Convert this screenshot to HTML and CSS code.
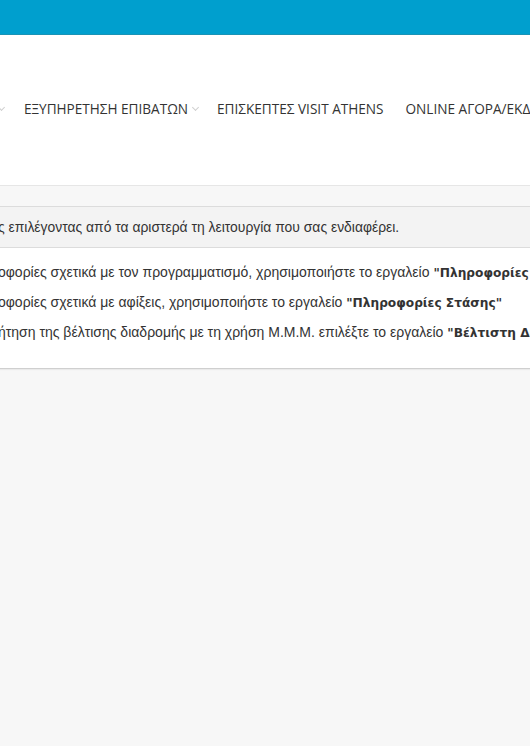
FILE: index.html
```html
<!DOCTYPE html>
<html lang="el">
<head>
<meta charset="utf-8">
<title>ΟΑΣΑ</title>
<link rel="stylesheet" href="styles.css">
</head>
<body>
<div class="topbar"></div>
<header class="header">
  <nav class="nav">
    <span class="nav-item cut"><span class="chev"></span></span>
    <span class="nav-item">ΕΞΥΠΗΡΕΤΗΣΗ ΕΠΙΒΑΤΩΝ<span class="chev"></span></span>
    <span class="nav-item">ΕΠΙΣΚΕΠΤΕΣ VISIT ATHENS</span>
    <span class="nav-item">ONLINE ΑΓΟΡΑ/ΕΚΔΟΣΗ</span>
  </nav>
</header>
<main class="main">
  <section class="panel">
    <div class="panel-head">ς επιλέγοντας από τα αριστερά τη λειτουργία που σας ενδιαφέρει.</div>
    <ul class="panel-body">
      <li>οφορίες σχετικά με τον προγραμματισμό, χρησιμοποιήστε το εργαλείο <b>"Πληροφορίες Γραμμής"</b></li>
      <li>οφορίες σχετικά με αφίξεις, χρησιμοποιήστε το εργαλείο <b>"Πληροφορίες Στάσης"</b></li>
      <li>ήτηση της βέλτισης διαδρομής με τη χρήση Μ.Μ.Μ. επιλέξτε το εργαλείο <b>"Βέλτιστη Διαδρομή"</b></li>
    </ul>
  </section>
</main>
</body>
</html>
```
FILE: styles.css
```css
html, body {
  margin: 0;
  padding: 0;
}
body {
  background: #f7f7f7;
  overflow: hidden;
  width: 530px;
  height: 746px;
  font-family: "Liberation Sans", Arial, sans-serif;
  color: #333;
}
.topbar {
  height: 34px;
  background: #009fce;
  border-bottom: 1px solid #1a93b5;
}
.header {
  background: #fff;
  height: 150px;
  border-bottom: 1px solid #e6e6e6;
  overflow: hidden;
}
.nav {
  display: flex;
  white-space: nowrap;
  padding-top: 65px;
  margin-left: -6px;
  font-family: "Open Sans", sans-serif;
  font-size: 13.6px;
  line-height: 18px;
  color: #333;
}
.nav-item {
  display: flex;
  align-items: center;
  margin-right: 22px;
}
.nav-item.cut {
  margin-right: 20px;
}
.nav-item:nth-child(2) {
  margin-right: 19px;
}
.chev {
  display: inline-block;
  width: 4px;
  height: 4px;
  border-right: 1px solid #d0d0d0;
  border-bottom: 1px solid #d0d0d0;
  transform: rotate(45deg);
  margin-left: 5px;
  margin-top: -3px;
}
.main {
  padding-top: 20px;
}
.panel {
  background: #fff;
  border-top: 1px solid #dcdcdc;
  border-bottom: 1px solid #cfcfcf;
  box-shadow: 0 1px 1px rgba(0,0,0,0.05);
  width: 560px;
}
.panel-head {
  background: #f3f3f3;
  border-bottom: 1px solid #dcdcdc;
  height: 40px;
  line-height: 40px;
  font-size: 13.9px;
  white-space: nowrap;
  overflow: hidden;
  text-indent: -2px;
}
.panel-body {
  list-style: none;
  margin: 0;
  padding: 9px 0 21px;
  font-size: 14px;
  white-space: nowrap;
  overflow: hidden;
}
.panel-body li {
  height: 30px;
  line-height: 30px;
  text-indent: -2px;
}
.panel-body b {
  font-family: "DejaVu Sans", Verdana, sans-serif;
  font-size: 12.2px;
  font-weight: bold;
}
```
